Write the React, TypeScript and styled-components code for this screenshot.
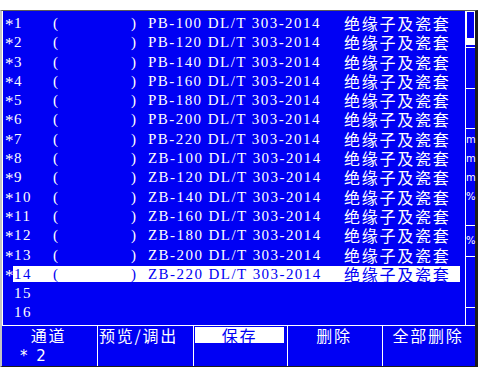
import * as React from "react";
import styled, { createGlobalStyle } from "styled-components";

const BLUE = "#0000f4";

const GlobalStyle = createGlobalStyle`
  html, body {
    margin: 0;
    padding: 0;
    background: #ffffff;
  }
  body {
    width: 478px;
    height: 377px;
    overflow: hidden;
  }
`;

const Frame = styled.div`
  margin-top: 10px;
  width: 473px;
  background: ${BLUE};
  border-top: 1px solid #5a5a5a;
  border-left: 2px solid #c4c4c4;
  border-right: 3px solid #1c1c1c;
  border-bottom: 1px solid #1c1c1c;
  display: flex;
  flex-direction: column;
`;

const Main = styled.div`
  display: flex;
  height: 314px;
`;

const List = styled.div`
  flex: 1;
  border-left: 1px solid #ffffff;
  padding-top: 2.3px;
  display: flex;
  flex-direction: column;
`;

const Row = styled.div`
  height: 19.3px;
  flex-shrink: 0;
  display: flex;
  align-items: center;
  padding-left: 2px;
  font-family: "Liberation Serif", serif;
  font-size: 15px;
  letter-spacing: 1.45px;
  color: #ffffff;
  white-space: pre;
`;

const Star = styled.span`
  width: 8px;
  font-size: 17px;
  line-height: 16px;
  padding-top: 4px;
`;

const Body = styled.div<{ $selected?: boolean }>`
  width: 446px;
  height: 16px;
  line-height: 16px;
  padding-left: 1px;
  display: grid;
  grid-template-columns: 39px 78px 17px 196px 1fr;
  background: ${(p) => (p.$selected ? "#ffffff" : "transparent")};
  color: ${(p) => (p.$selected ? BLUE : "#ffffff")};
`;

const Cn = styled.span`
  font-family: "Noto Sans CJK SC", sans-serif;
  font-size: 16px;
  letter-spacing: 1.75px;
`;

const Side = styled.div`
  width: 9px;
  border-left: 1px solid #ffffff;
  display: flex;
  flex-direction: column;
  font-family: "DejaVu Sans", sans-serif;
  font-size: 10px;
  line-height: 19px;
  color: #ffffff;
`;

const Thumb = styled.div`
  height: 26px;
  flex-shrink: 0;
  border: 1px solid #ffffff;
  border-bottom-width: 7px;
`;

const Segment = styled.div<{ $h: number; $pad?: number; $plain?: boolean }>`
  height: ${(p) => p.$h}px;
  flex-shrink: 0;
  border-top: ${(p) => (p.$plain ? "none" : "1px solid #ffffff")};
  padding-top: ${(p) => p.$pad ?? 0}px;
  box-sizing: border-box;
  text-align: center;
`;

const Bar = styled.div`
  display: grid;
  grid-template-columns: 95px 96px 94px 95px 93px;
  height: 40px;
  border-top: 1px solid #ffffff;
`;

const Cell = styled.div<{ $first?: boolean }>`
  border-left: ${(p) => (p.$first ? "none" : "1px solid #ffffff")};
  display: flex;
  flex-direction: column;
`;

const Label = styled.div<{ $active?: boolean; $left?: boolean }>`
  height: 16px;
  margin: 1px 3px 0 1px;
  line-height: 16px;
  text-align: ${(p) => (p.$left ? "left" : "center")};
  font-family: "Noto Sans CJK SC", sans-serif;
  font-size: 16px;
  letter-spacing: 1.75px;
  white-space: pre;
  background: ${(p) => (p.$active ? "#ffffff" : "transparent")};
  color: ${(p) => (p.$active ? BLUE : "#ffffff")};
`;

const Sub = styled.div`
  margin: 5px 0 0 18px;
  line-height: 16px;
  font-family: "DejaVu Sans", sans-serif;
  font-size: 15px;
  word-spacing: 4px;
  color: #ffffff;
  white-space: pre;
`;

const codes = [
  "PB-100", "PB-120", "PB-140", "PB-160", "PB-180", "PB-200", "PB-220",
  "ZB-100", "ZB-120", "ZB-140", "ZB-160", "ZB-180", "ZB-200", "ZB-220",
];

const App = () => (
  <>
    <GlobalStyle />
    <Frame>
      <Main>
        <List>
          {codes.map((code, i) => (
            <Row key={code}>
              <Star>*</Star>
              <Body $selected={i === 13}>
                <span>{i + 1}</span>
                <span>(</span>
                <span>)</span>
                <span>{code} DL/T 303-2014</span>
                <Cn>绝缘子及瓷套</Cn>
              </Body>
            </Row>
          ))}
          {[15, 16].map((n) => (
            <Row key={n}>
              <Star />
              <Body>
                <span>{n}</span>
              </Body>
            </Row>
          ))}
        </List>
        <Side>
          <Thumb />
          <Segment $h={2} $plain />
          <Segment $h={41} />
          <Segment $h={40} />
          <Segment $h={97} $pad={1}>
            <div>m</div>
            <div>m</div>
            <div>m</div>
            <div>%</div>
          </Segment>
          <Segment $h={31} $pad={5}>%</Segment>
          <Segment $h={51} />
          <Segment $h={18} />
        </Side>
      </Main>
      <Bar>
        <Cell $first>
          <Label>通道</Label>
          <Sub>* 2</Sub>
        </Cell>
        <Cell>
          <Label $left>预览/调出</Label>
        </Cell>
        <Cell>
          <Label $active>保存</Label>
        </Cell>
        <Cell>
          <Label>删除</Label>
        </Cell>
        <Cell>
          <Label>全部删除</Label>
        </Cell>
      </Bar>
    </Frame>
  </>
);

export default App;
